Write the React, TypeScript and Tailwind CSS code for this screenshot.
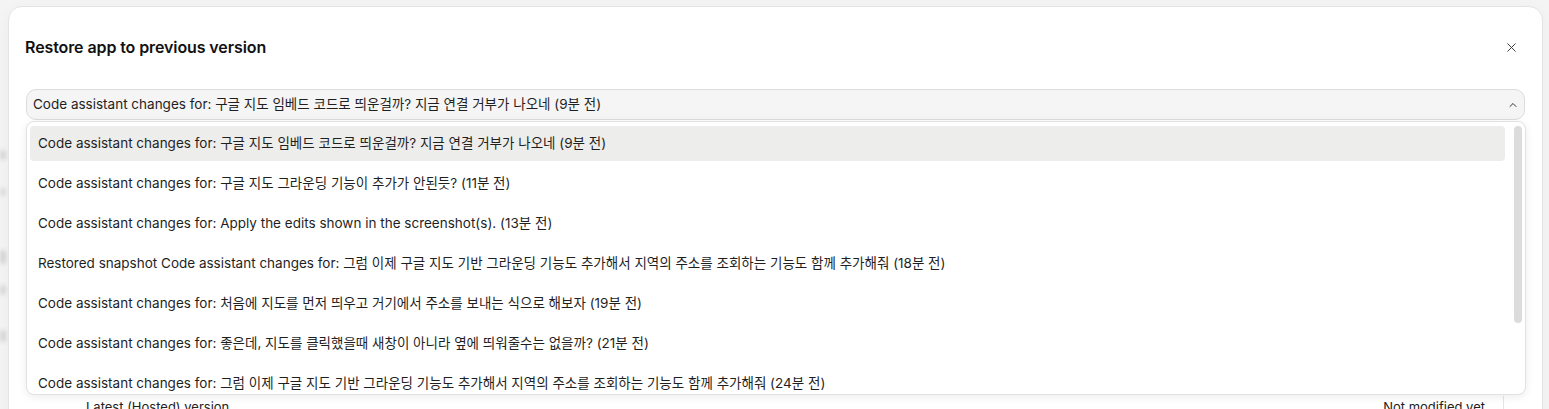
import { X, ChevronUp } from "lucide-react";

const items = [
  "Code assistant changes for: 구글 지도 임베드 코드로 띄운걸까? 지금 연결 거부가 나오네 (9분 전)",
  "Code assistant changes for: 구글 지도 그라운딩 기능이 추가가 안된듯? (11분 전)",
  "Code assistant changes for: Apply the edits shown in the screenshot(s). (13분 전)",
  "Restored snapshot Code assistant changes for: 그럼 이제 구글 지도 기반 그라운딩 기능도 추가해서 지역의 주소를 조회하는 기능도 함께 추가해줘 (18분 전)",
  "Code assistant changes for: 처음에 지도를 먼저 띄우고 거기에서 주소를 보내는 식으로 해보자 (19분 전)",
  "Code assistant changes for: 좋은데, 지도를 클릭했을때 새창이 아니라 옆에 띄워줄수는 없을까? (21분 전)",
  "Code assistant changes for: 그럼 이제 구글 지도 기반 그라운딩 기능도 추가해서 지역의 주소를 조회하는 기능도 함께 추가해줘 (24분 전)",
];

const font = {
  fontFamily: '"Inter", "Noto Sans CJK KR", sans-serif',
};

function Backdrop() {
  return (
    <div aria-hidden="true" className="absolute inset-0 bg-[#f4f4f4]">
      <div className="absolute left-0 top-[150px] h-[10px] w-[6px] rounded bg-[#d6d6d6] blur-[2px]" />
      <div className="absolute left-0 top-[188px] h-[8px] w-[6px] rounded bg-[#dadada] blur-[2px]" />
      <div className="absolute left-0 top-[250px] h-[14px] w-[6px] rounded bg-[#d4d4d4] blur-[2px]" />
      <div className="absolute left-0 top-[285px] h-[10px] w-[6px] rounded bg-[#d8d8d8] blur-[2px]" />
      <div className="absolute left-0 top-[330px] h-[12px] w-[6px] rounded bg-[#d6d6d6] blur-[2px]" />
    </div>
  );
}

export default function App() {
  return (
    <div
      className="relative h-[409px] w-full overflow-hidden pl-[8px] pr-[6px] pt-[6px] text-[#1a1a1a]"
      style={font}
    >
      <Backdrop />
      <div className="relative h-[440px] rounded-[14px] border border-[#e4e4e4] bg-white px-[17px] pt-[30px] shadow-[0_4px_16px_rgba(0,0,0,0.04)]">
        <div className="flex h-[20px] items-center justify-between pr-[6px]">
          <h2 className="-ml-[1px] text-[16px] font-semibold leading-[20px] tracking-[-0.1px] text-[#111]">
            Restore app to previous version
          </h2>
          <X className="h-[15px] w-[15px] text-[#333]" strokeWidth={1.5} />
        </div>

        <div className="relative mt-[32px]">
          <button className="flex h-[31px] w-full items-center justify-between rounded-[10px] border border-[#dcdcdc] bg-[#f5f5f5] pl-[6px] pr-[5px] text-left text-[13.5px] text-[#1f1f1f]">
            <span>{items[0]}</span>
            <ChevronUp className="h-[12px] w-[12px] text-[#333]" strokeWidth={2} />
          </button>

          <div className="absolute left-0 right-[-1px] top-[32px] z-10 flex h-[274px] overflow-hidden rounded-[8px] border border-[#e2e2e2] bg-white shadow-[0_2px_8px_rgba(0,0,0,0.08)]">
            <ul className="flex flex-1 flex-col gap-[5px] pl-[3px] pt-[4px]">
              {items.map((text, i) => (
                <li
                  key={i}
                  className={`flex h-[35px] shrink-0 items-center rounded-[4px] px-[8px] text-[13.5px] text-[#1f1f1f] ${
                    i === 0 ? "bg-[#ededeb]" : ""
                  }`}
                >
                  {text}
                </li>
              ))}
            </ul>
            <div className="flex w-[20px] shrink-0 justify-start pl-[9px] pt-[4px]">
              <div className="h-[197px] w-[8px] rounded-full bg-[#dcdcdc]" />
            </div>
          </div>
        </div>

        <div className="mt-[276px] flex h-[60px] pr-[21px]">
          <div className="flex flex-1 items-start justify-between pl-[60px] pr-[18px] pt-[2px] text-[13px] text-[#222]">
            <span>Latest (Hosted) version</span>
            <span>Not modified yet</span>
          </div>
          <div className="h-full w-px bg-[#e4e4e4]" />
        </div>
      </div>
    </div>
  );
}
